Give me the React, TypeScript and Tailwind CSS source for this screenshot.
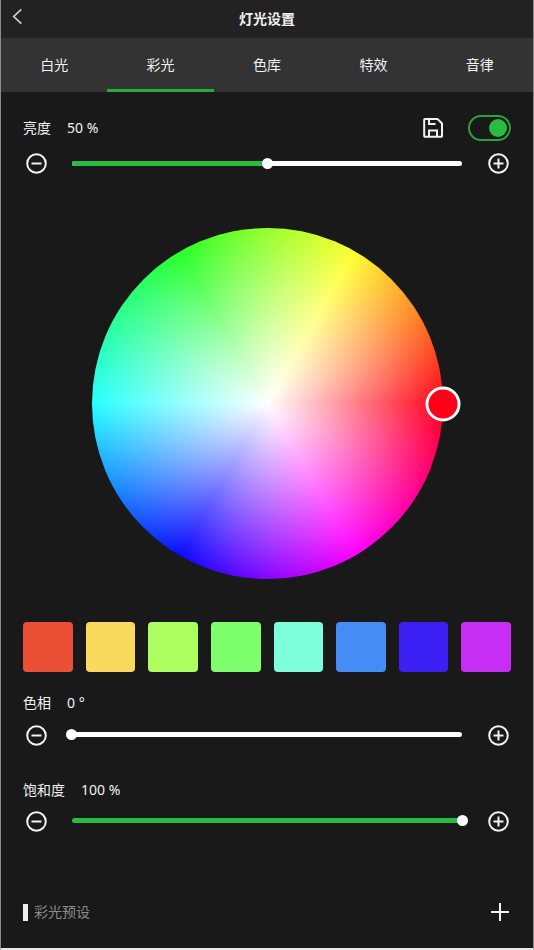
import { useState } from "react";

const tabs = ["白光", "彩光", "色库", "特效", "音律"];

const swatches = [
  { name: "红", color: "bg-[#eb5037]" },
  { name: "黄", color: "bg-[#f9da5c]" },
  { name: "黄绿", color: "bg-[#acff5e]" },
  { name: "绿", color: "bg-[#7eff6c]" },
  { name: "青", color: "bg-[#7effdc]" },
  { name: "蓝", color: "bg-[#468cf5]" },
  { name: "靛", color: "bg-[#3c1ff2]" },
  { name: "紫", color: "bg-[#c62ff3]" },
];

function CircleIcon({ plus = false }: { plus?: boolean }) {
  return (
    <svg viewBox="0 0 26 26" className="size-[26px]" fill="none" stroke="currentColor" strokeWidth="2" aria-hidden="true">
      <circle cx="13.5" cy="13.5" r="9.3" />
      <path d="M8.5 13.5h10" />
      {plus && <path d="M13.5 8.5v10" />}
    </svg>
  );
}

type SliderProps = {
  id: string;
  label: string;
  max: number;
  value: number;
  onChange: (value: number) => void;
};

function Slider({ id, label, max, value, onChange }: SliderProps) {
  return (
    <div className="flex items-center gap-[17px]">
      <button type="button" aria-label={`减少${label}`} onClick={() => onChange(Math.max(0, value - 1))}>
        <CircleIcon />
      </button>
      <div className="grid h-[26px] flex-1 items-center">
        <div className="col-start-1 row-start-1 mx-1.5 h-[5px] overflow-hidden rounded-full bg-white">
          <div className="h-full bg-[#2abb43]" style={{ width: `${(value / max) * 100}%` }} />
        </div>
        <input
          id={id}
          type="range"
          min={0}
          max={max}
          value={value}
          onChange={(e) => onChange(Number(e.target.value))}
          className="col-start-1 row-start-1 h-[11px] w-full appearance-none bg-transparent [&::-webkit-slider-thumb]:size-[11px] [&::-webkit-slider-thumb]:appearance-none [&::-webkit-slider-thumb]:rounded-full [&::-webkit-slider-thumb]:bg-white"
        />
      </div>
      <button type="button" aria-label={`增加${label}`} onClick={() => onChange(Math.min(max, value + 1))}>
        <CircleIcon plus />
      </button>
    </div>
  );
}

export default function App() {
  const [tab, setTab] = useState("彩光");
  const [on, setOn] = useState(true);
  const [brightness, setBrightness] = useState(50);
  const [hue, setHue] = useState(0);
  const [saturation, setSaturation] = useState(100);

  return (
    <div className="flex min-h-screen flex-col border-x border-b-2 border-x-[#8c8c8c] border-b-[#e8e8e8] bg-[#191919] font-['Noto_Sans','Noto_Sans_CJK_SC',sans-serif] text-sm leading-5 text-[#f2f2f2]">
      <header className="grid h-[38px] grid-cols-[40px_1fr_40px] items-center bg-[#222222]">
        <button type="button" aria-label="返回" className="h-full">
          <svg viewBox="0 0 40 38" className="h-[38px] w-10" fill="none" stroke="#d0d0d0" strokeWidth="1.7" aria-hidden="true">
            <path d="M20.3 9.3l-7.6 7.2 7.6 7.2" />
          </svg>
        </button>
        <h1 className="text-center font-bold">灯光设置</h1>
      </header>

      <nav className="grid h-[54px] grid-cols-5 bg-[#333333]">
        {tabs.map((name) => (
          <button
            key={name}
            type="button"
            onClick={() => setTab(name)}
            className={`border-y-3 border-t-transparent ${tab === name ? "border-b-[#27ab3d]" : "border-b-transparent"}`}
          >
            {name}
          </button>
        ))}
      </nav>

      <main className="flex flex-1 flex-col px-[22px] pt-[22px]">
        <div className="mb-2 flex h-7 items-center">
          <label htmlFor="brightness">亮度</label>
          <span className="ml-4">{brightness} %</span>
          <button type="button" aria-label="保存" className="ml-auto mr-[25px]">
            <svg viewBox="0 0 20 20" className="size-5" fill="none" stroke="currentColor" strokeWidth="2" aria-hidden="true">
              <path d="M2 1h12.5L19 5.5V18a.8.8 0 0 1-.8.8H2a.8.8 0 0 1-.8-.8V1.800A.8.8 0 0 1 2 1z" />
              <path d="M6 18.500v-6h8v6M6 1v5h6.500" />
            </svg>
          </button>
          <input
            type="checkbox"
            role="switch"
            aria-label="开关"
            checked={on}
            onChange={(e) => setOn(e.target.checked)}
            className="flex h-[26px] w-[43px] appearance-none items-center rounded-full border-2 border-[#777777] px-0.5 before:size-[18px] before:rounded-full before:bg-[#777777] checked:justify-end checked:border-[#27a43b] checked:before:bg-[#2abb43]"
          />
        </div>
        <Slider id="brightness" label="亮度" max={100} value={brightness} onChange={setBrightness} />

        <div className="relative mx-auto mt-[52px] aspect-square w-[351px] max-w-full rounded-full bg-[radial-gradient(closest-side,#fff,transparent),conic-gradient(from_90deg,#ff0018,#ff00ff_60deg,#0a0aff_120deg,#28ffff_180deg,#28ff28_240deg,#ffff30_300deg,#ff0018)]">
          <button
            type="button"
            aria-label="选择颜色"
            className="absolute top-1/2 left-full size-[35px] -translate-x-1/2 -translate-y-1/2 rounded-full border-3 border-white bg-[#ff0018]"
          />
        </div>

        <div className="mt-[43px] grid grid-cols-8 gap-[13px]">
          {swatches.map((s) => (
            <button key={s.name} type="button" aria-label={s.name} className={`aspect-square rounded ${s.color}`} />
          ))}
        </div>

        <div className="mt-[21px] mb-[9px] flex gap-4">
          <label htmlFor="hue">色相</label>
          <span>{hue} °</span>
        </div>
        <Slider id="hue" label="色相" max={360} value={hue} onChange={setHue} />

        <div className="mt-8 mb-2 flex gap-4">
          <label htmlFor="saturation">饱和度</label>
          <span>{saturation} %</span>
        </div>
        <Slider id="saturation" label="饱和度" max={100} value={saturation} onChange={setSaturation} />

        <div className="mt-auto mb-[26px] flex items-center">
          <span className="h-[17px] w-[5px] bg-[#eeeeee]" />
          <h2 className="ml-1.5 text-[#8c8c8c]">彩光预设</h2>
          <button type="button" aria-label="添加预设" className="ml-auto">
            <svg viewBox="0 0 20 20" className="size-5" fill="none" stroke="currentColor" strokeWidth="2" aria-hidden="true">
              <path d="M0 10h18M9 1v18" />
            </svg>
          </button>
        </div>
      </main>
    </div>
  );
}
